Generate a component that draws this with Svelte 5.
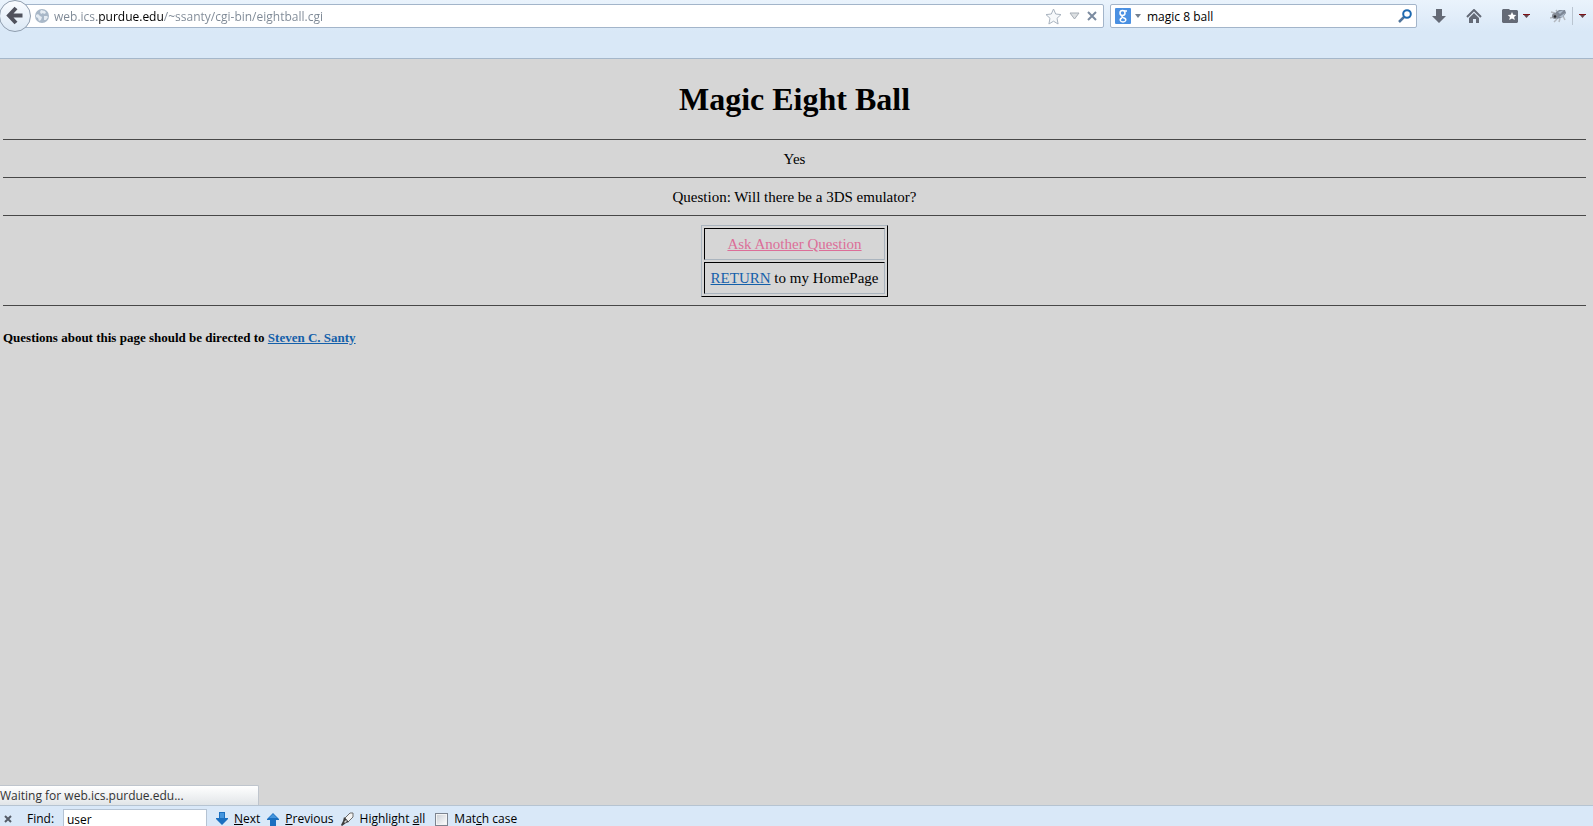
<script>
	let url = $state('web.ics.purdue.edu/~ssanty/cgi-bin/eightball.cgi');
	let search = $state('magic 8 ball');
	let find = $state('user');
	let matchCase = $state(false);
</script>

<div class="window">
	<header class="chrome">
		<div class="navbar">
			<button class="back" aria-label="Back">
				<svg width="32" height="32" viewBox="0 0 32 32">
					<path d="m17 8-7 7.500 7 7.500M10 15.500h13.500" fill="none" stroke="#50525d" stroke-width="4" />
				</svg>
			</button>
			<div class="urlbar">
				<svg width="14" height="14" viewBox="0 0 14 14">
					<circle cx="7" cy="7" r="7" fill="#a9b8c8" />
					<path
						d="M6 1l4 1 1 2-2 1-1-1-2 1-1-2zM1 6l2-1 2 2 2 1-1 3-2 1-1-3-2-1zM9 7l3 0 1 1-2 3-2 0z"
						fill="#e4ebf2"
					/>
				</svg>
				<input class="address" aria-label="Address" spellcheck="false" bind:value={url} />
				<button class="icon" aria-label="Bookmark this page">
					<svg width="17" height="17" viewBox="0 0 17 17">
						<path
							d="m8.500 1 2.200 5 5.300.6-4 3.700 1.100 5.700-4.600-2.800L3.900 16 5 10.300 1 6.600 6.300 6z"
							fill="#f7f9fb"
							stroke="#a9b3bf"
						/>
					</svg>
				</button>
				<button class="icon" aria-label="History">
					<svg width="11" height="8" viewBox="0 0 11 8">
						<path d="M1 1h9L5.500 7z" fill="#dde0e2" stroke="#a6adb5" />
					</svg>
				</button>
				<button class="icon stop" aria-label="Stop">
					<svg width="10" height="10" viewBox="0 0 10 10">
						<path d="m1 1 8 8M9 1 1 9" stroke="#7b8ba0" stroke-width="2" />
					</svg>
				</button>
			</div>
			<div class="searchbar">
				<button class="engine" aria-label="Search engine">
					<svg width="16" height="16" viewBox="0 0 16 16">
						<rect width="16" height="16" rx="1" fill="#4a90e2" />
						<g fill="none" stroke="#fff">
							<circle cx="7.500" cy="5" r="2.500" stroke-width="1.500" />
							<path d="M9 3h3M8 7.500c-2 1-1 2 1 2.500 3 1 2 4-1 4s-4-3-1-4" stroke-width="1.400" />
						</g>
					</svg>
					<svg width="6" height="4" viewBox="0 0 6 4">
						<path d="M0 0h6L3 4z" fill="#74808f" />
					</svg>
				</button>
				<input aria-label="Search" spellcheck="false" bind:value={search} />
				<button class="icon" aria-label="Go">
					<svg width="14" height="14" viewBox="0 0 14 14">
						<path d="M1 13 6 8" stroke="#50749b" stroke-width="2.500" />
						<circle cx="9" cy="5" r="3.800" fill="#fff" stroke="#1d69b0" stroke-width="2" />
					</svg>
				</button>
			</div>
			<div class="tools">
				<button class="icon" aria-label="Downloads">
					<svg width="14" height="14" viewBox="0 0 14 14">
						<path d="M4 0h6v7h4l-7 7-7-7h4z" fill="#646a76" />
					</svg>
				</button>
				<button class="icon" aria-label="Home">
					<svg width="16" height="14" viewBox="0 0 16 14">
						<path d="m1 8 7-7 7 7" fill="none" stroke="#646a76" stroke-width="2" />
						<path d="m8 4 5 5v5h-3v-4H7v4H3V9z" fill="#646a76" />
					</svg>
				</button>
				<button class="icon menu" aria-label="Bookmarks">
					<svg width="16" height="14" viewBox="0 0 16 14">
						<path d="M1 0h6l1 1h7l1 1v11l-1 1H1l-1-1V1z" fill="#646a76" />
						<path d="m10 3 1.300 2.700 3 .3-2.200 2 .7 3-2.800-1.500L7.200 11l.7-3-2.200-2 3-.3z" fill="#fff" />
					</svg>
					<svg width="7" height="4" viewBox="0 0 7 4">
						<path d="M0 0h7L3.500 4z" fill="#65484f" /><path d="M0 0h7v1H0z" fill="#7d1015" />
					</svg>
				</button>
				<button class="icon bug" aria-label="Firebug">
					<svg width="16" height="14" viewBox="0 0 16 14">
						<path d="m5 4-4-1M4 8 0 9M7 10l-3 3M10 9l-1 4M13 7l2 4M8 4 6 1" stroke="#b3b8bf" stroke-width="1.500" />
						<path d="m5 4 4-3 6 0 1 3-3 4-6 2z" fill="#7d8796" />
						<path d="m8 3 6-2-4 4zM9 8l6-4-2 4z" fill="#aebccc" />
						<circle cx="5" cy="7" r="3" fill="#868c96" />
						<circle cx="5" cy="7.500" r="1.300" fill="#26282d" />
					</svg>
				</button>
				<button class="icon more" aria-label="Firebug menu">
					<svg width="7" height="4" viewBox="0 0 7 4">
						<path d="M0 0h7L3.500 4z" fill="#65484f" /><path d="M0 0h7v1H0z" fill="#7d1015" />
					</svg>
				</button>
			</div>
		</div>
	</header>

	<main>
		<h1>Magic Eight Ball</h1>
		<hr />
		<p>Yes</p>
		<hr />
		<p>Question: Will there be a 3DS emulator?</p>
		<hr />
		<table>
			<tbody>
				<tr><td><a class="visited" href="#ask">Ask Another Question</a></td></tr>
				<tr><td><a href="#home">RETURN</a> to my HomePage</td></tr>
			</tbody>
		</table>
		<hr />
		<h5>Questions about this page should be directed to <a href="#santy">Steven C. Santy</a></h5>
	</main>

	<div class="status">Waiting for web.ics.purdue.edu...</div>

	<footer class="findbar">
		<button class="close" aria-label="Close find bar">
			<svg width="8" height="8" viewBox="0 0 8 8">
				<path d="m1 1 6 6M7 1 1 7" stroke="#555c68" stroke-width="2" />
			</svg>
		</button>
		<label class="caption" for="find">Find:</label>
		<input id="find" class="field" spellcheck="false" bind:value={find} />
		<button class="action">
			<svg width="12" height="14" viewBox="0 0 12 14">
				<path d="M3 0h6v6h3v1l-6 6-6-6V6h3z" fill="#1a6fc0" /><path d="M4 1h4v5H4z" fill="#4495dd" />
			</svg>
			<span><u>N</u>ext</span>
		</button>
		<button class="action">
			<svg width="12" height="14" viewBox="0 0 12 14">
				<path d="M3 14h6V8h3V7L6 1 0 7v1h3z" fill="#1a6fc0" /><path d="m6 2 4 4H2z" fill="#4495dd" />
			</svg>
			<span><u>P</u>revious</span>
		</button>
		<button class="action">
			<svg width="13" height="14" viewBox="0 0 13 14">
				<path d="m4 6 5-5h3v4L7 10z" fill="#f4f4f4" stroke="#6c6c6c" />
				<path d="m3 5 5 5-3 1-4 3-1-1 2-4z" fill="#3d3d3d" />
				<path d="m3 10 2-2 1 1-2 2z" fill="#d8d8d8" />
			</svg>
			<span>Highlight <u>a</u>ll</span>
		</button>
		<label class="match">
			<input type="checkbox" bind:checked={matchCase} />
			<span>Mat<u>c</u>h case</span>
		</label>
	</footer>
</div>

<style>
	:global(body) {
		margin: 0;
	}
	.window {
		display: flex;
		flex-direction: column;
		height: 100vh;
		overflow: hidden;
		background: #d6d6d6;
		font: 12px/16px 'Open Sans', sans-serif;
		color: #000;
	}
	button,
	input {
		font: inherit;
		color: inherit;
		padding: 0;
		border: 0;
		background: none;
	}
	button {
		display: flex;
		align-items: center;
	}
	input {
		min-width: 0;
		outline: none;
	}
	svg {
		display: block;
		flex: none;
	}

	.chrome {
		flex: none;
		box-sizing: border-box;
		height: 59px;
		border-bottom: 1px solid #a5b7ca;
		background: linear-gradient(#eaf3fc, #d9e8f7 32px);
	}
	.navbar {
		display: flex;
		align-items: center;
		height: 32px;
	}
	.back {
		z-index: 1;
		box-sizing: border-box;
		width: 32px;
		height: 32px;
		margin-left: -1px;
		justify-content: center;
		border: 1px solid #8f9dae;
		border-radius: 50%;
		background: linear-gradient(#fafcff, #dbe8f5);
	}
	.urlbar,
	.searchbar {
		box-sizing: border-box;
		display: flex;
		align-items: center;
		height: 24px;
		border: 1px solid #a3b5ca;
		border-radius: 2px;
		background: #fff;
	}
	.urlbar {
		flex: 1;
		margin-left: -8px;
		padding: 0 6px 0 11px;
	}
	.navbar input {
		flex: 1;
		padding-top: 2px;
	}
	.address {
		margin-left: 5px;
		/* only the registered domain is drawn in black */
		background: linear-gradient(90deg, #7c8794 43px, #000 43px 109px, #7c8794 109px);
		background-clip: text;
		-webkit-background-clip: text;
		-webkit-text-fill-color: transparent;
	}
	.urlbar .icon {
		margin-left: 7px;
	}
	.searchbar {
		width: 307px;
		margin-left: 6px;
		padding: 0 4px;
	}
	.searchbar input {
		margin-left: 6px;
	}
	.engine {
		gap: 4px;
	}
	.tools {
		display: flex;
		align-items: center;
		gap: 20px;
		padding: 0 7px 0 15px;
	}
	.menu {
		gap: 5px;
	}
	.more {
		height: 18px;
		margin-left: -14px;
		padding-left: 6px;
		border-left: 1px solid #bac5d1;
	}

	main {
		flex: 1;
		padding: 0 7px 0 3px;
		font: 15px/20px 'Liberation Serif', serif;
		text-align: center;
	}
	h1 {
		margin: 21px 0;
		font-size: 32px;
		line-height: 38px;
	}
	hr {
		height: 1px;
		margin: 0;
		border: 0;
		background: #484848;
	}
	p {
		margin: 9px 0 8px;
	}
	table {
		margin: 9px auto 8px;
		border: 1px solid;
		border-color: #aab4be #000 #000 #aab4be;
		border-spacing: 2px;
	}
	td {
		padding: 5px 6px;
		border: 1px solid;
		border-color: #000 #aab4be #aab4be #000;
	}
	a {
		color: #1460aa;
	}
	.visited {
		color: #dc6e98;
	}
	h5 {
		margin: 22px 0;
		font-size: 13px;
		text-align: left;
	}

	.status {
		box-sizing: border-box;
		width: 259px;
		height: 20px;
		border: solid #bfc5cd;
		border-width: 1px 1px 0 0;
		border-top-right-radius: 2px;
		background: linear-gradient(#fff, #e1e5e8);
		color: #333;
		line-height: 20px;
	}
	/* the bar runs off the bottom edge of the window */
	.findbar {
		display: flex;
		align-items: flex-start;
		flex: none;
		box-sizing: border-box;
		height: 21px;
		overflow: hidden;
		border-top: 1px solid #b6c4d2;
		background: #d9e8f8;
		line-height: 26px;
	}
	.findbar button,
	.match {
		display: flex;
		align-items: center;
		height: 26px;
	}
	.close {
		margin: 0 15px 0 4px;
	}
	.caption {
		width: 36px;
	}
	.field {
		box-sizing: border-box;
		width: 144px;
		height: 22px;
		margin: 3px 9px 0 0;
		padding: 0 3px 2px;
		border: 1px solid #b5c3d3;
		background: #fff;
		line-height: 16px;
	}
	.findbar .action {
		gap: 6px;
		margin-right: 7px;
	}
	.match {
		gap: 6px;
	}
	.match input {
		appearance: none;
		box-sizing: border-box;
		width: 13px;
		height: 13px;
		margin: 0 0 0 3px;
		border: 1px solid #7c8490;
		background: linear-gradient(135deg, #c9ced5, #fff);
		box-shadow: inset 0 0 0 1px #f4f4f4;
	}
	.match input:checked {
		background: #1a6fc0;
	}
</style>
